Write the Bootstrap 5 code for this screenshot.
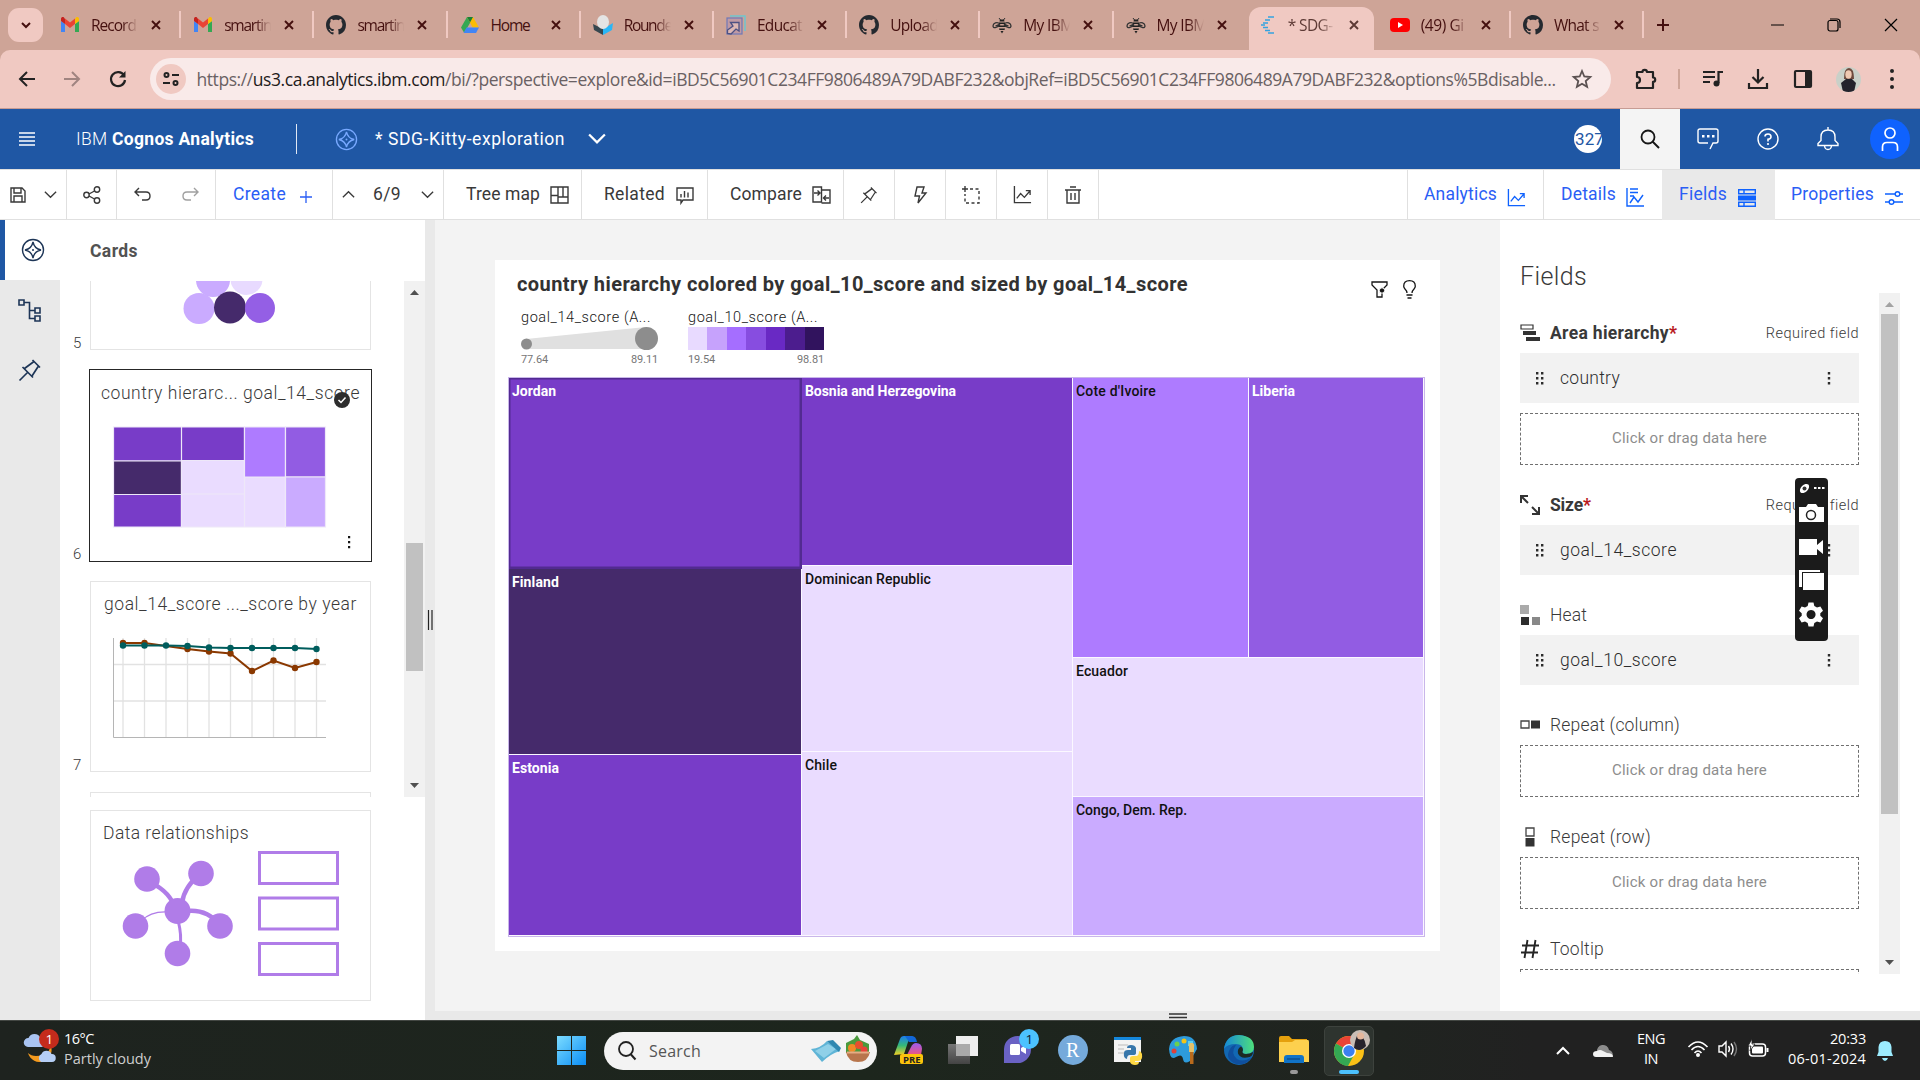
<!DOCTYPE html>
<html lang="en">
<head>
<meta charset="utf-8">
<title>IBM Cognos Analytics</title>
<link href="https://cdn.jsdelivr.net/npm/bootstrap@5.3.0/dist/css/bootstrap.min.css" rel="stylesheet">
<style>
html,body{height:1080px;overflow:hidden}
body{width:1920px;font-family:Roboto,"Liberation Sans",sans-serif;font-size:17.5px;line-height:1.3;color:#393939;background:#fff}
svg{display:block;flex:none;overflow:visible}
.fit{display:inline-block;white-space:nowrap;flex:none}
.ln{fill:none;stroke:currentColor;stroke-width:1.4}
.win-font{font-family:"Open Sans","Noto Sans",sans-serif}
/* browser */
.tabstrip{height:50px;background:#cea497;color:#45100f;font-size:15.5px}
.tab-menu{width:35px;height:34px;margin:8px 5px 8px 8px;border-radius:11px;background:#f0c9c2}
.b-tab{width:133.2px;height:36px;padding-left:12px;position:relative;flex:none}
.b-tab .ttl{width:48px;margin-left:11px;overflow:hidden;white-space:nowrap;-webkit-mask-image:linear-gradient(90deg,#000 65%,transparent 98%)}
.b-tab .cls{margin-left:11px}
.b-tab.sep{border-right:2px solid transparent;border-image:linear-gradient(transparent 14%,#f0c9c2 14%,#f0c9c2 84%,transparent 84%) 1}
.b-tab.now{height:43px;margin-top:7px;background:#f0c9c2;border-radius:12px 12px 0 0;width:125px;margin-left:2px;margin-right:4px;padding-bottom:7px;color:#5d3a35}
.b-tab.now .cls{margin-left:12px}
.addr-row{height:59px;background:#f0c9c2;border-radius:10px 10px 0 0;border-bottom:1px solid #c79c94}
.addr-wrap{background:#cea497}
.addr{width:1461px;height:42px;border-radius:21px;background:#f9eae9;color:#6a6163;font-size:17.5px;margin-left:2.5px}
.addr b{font-weight:400;color:#1f1b1b}
.tune{width:30px;height:30px;border-radius:50%;background:#f0c9c2;margin-left:6px}
.c24{width:45px}
/* app header */
.app-head{height:60px;background:#1f57a4;color:#fff}
.search-cell{width:60px;height:60px;background:#f4f4f4;color:#161616}
.h-cell{width:60px}
.count{width:28px;height:28px;border-radius:50%;background:#fff;color:#1f57a4;margin-right:18px;padding-left:1px;font-size:17px}
.user{width:40px;height:40px;border-radius:50%;background:#0f62fe}
/* toolbar */
.tools{height:51px;border-bottom:1px solid #e0e0e0;border-top:1px solid #e0e0e0}
.t-cell{height:50px;border-right:1px solid #e0e0e0;flex:none}
.blue{color:#0f62fe}
.blue-txt{color:#2a5ef5}
/* main */
.main{height:800px}
.rail{width:60px;background:#e9e9e9;color:#1d3557}
.rail-it{height:60px;width:60px;padding-right:1px}
.rail-it.on{background:#fff;border-left:5px solid #1f57a4;padding-right:0}
.cards{width:365px}
.cards-h{height:61px;padding:20px 0 0 30px;font-weight:700;color:#525252}
.list{height:516px;overflow:hidden}
.tile{width:281px;height:191px;border:1px solid #e4e4e4;margin:0 0 20px 9px;background:#fff;position:relative;flex:none}
.tile.part{height:69px;border-top:0}
.tile.sel{border-color:transparent;outline:1px solid #262626}
.tile .cap{position:absolute;left:0;top:11px;width:100%;text-align:center;font-weight:300}
.no{width:21px;padding-left:13px;font-size:15px;font-weight:300;flex:none;height:194px}
.tile svg.art{position:absolute;left:-1px;top:-1px}
.row-no{height:211px}
.sbar{width:21px;background:#f1f1f1}
.thumb{width:17px;background:#c1c1c1}
.split{width:10px;background:#e9e9e9}
.stage{background:#f3f3f3;height:791px;width:1065px;padding:40px 60px}
.sheet{width:945px;height:691px;background:#fff;padding:9px 13px}
.foot{height:9px;background:#e9e9e9}
.viz-t{font-size:20px;font-weight:700;color:#323232;height:34px;padding:2px 0 0 9px}
.leg{height:74px;margin-left:13px}
.leg-n{font-size:14.5px;line-height:18px;color:#161616;font-weight:300}
.leg-v{font-size:11px;line-height:14px;color:#767676}
.ramp{height:23px;width:136px}
.ramp div{flex:1}
.tmap{width:917px;height:560px;font-size:14px;color:#111;border:1px solid #c9b6ea}
.tc{border-right:1px solid #fbf8ff;border-bottom:1px solid #fbf8ff;padding:3px;font-weight:500;overflow:hidden;flex:none;line-height:20px}
.tc.w{color:#fff;font-weight:700}
.c1{background:#783cc8}.c2{background:#452a6b}.c3{background:#eadcff}.c4{background:#ae7bff}.c5{background:#925ce3}.c6{background:#caabff}
.tc.hi{box-shadow:inset 0 0 0 1.5px #522a91;border-color:#522a91}
/* fields */
.fields{width:420px;height:791px;padding-left:20px}
.fields h2{font-size:25px;font-weight:300;height:73px;padding-top:41px;margin:0;line-height:32px}
.fl{height:681px;width:339px;overflow:hidden;padding-top:20px;position:relative}
.f-h{height:40px}
.f-h .f-n{margin-left:10px;font-weight:300}
.f-h b{font-weight:700}
.star{color:#b81921;font-weight:700}
.f-i{height:50px;background:#f2f2f2;padding:0 26px 0 15px;margin-bottom:20px;font-weight:300;color:#2c2c2c}
.f-d{height:52px;border:1px dashed #6f6f6f;margin-bottom:20px;color:#8d8d8d;font-size:15px;padding-bottom:1px}
.req{font-size:14.5px;font-weight:300;padding-top:2px}
.capture{position:absolute;left:1795px;top:478px;width:33px;height:163px;background:#1b1b1b;border-radius:4px}
/* taskbar */
.task{height:60px;background:linear-gradient(90deg,#1e231f,#1d261d 45%,#202420 72%,#212121 80%);border-top:1px solid #434743;color:#fff;font-size:14.5px;line-height:20px}
.two{padding-bottom:3px}
.s-pill{width:273px;height:38px;border-radius:19px;background:#f3f3f3;color:#555;font-size:16px}
.ti{width:55.2px;height:60px;padding-bottom:2px;position:relative;flex:none}
.ti.act{width:50px;height:50px;background:#2e342f;border:1px solid #3d423d;border-radius:5px;margin:0 2px;padding:0}
</style>
</head>
<body>
<svg width="0" height="0" class="position-absolute">
<defs>
<symbol id="gmail" viewBox="0 0 20 20"><path fill="#4285f4" d="M1 17h4V9L1 6z"/><path fill="#34a853" d="M15 17h4V6l-4 3z"/><path fill="#fbbc04" d="M15 9l4-3V4c0-2-2-2.500-3-1.500L15 4z"/><path fill="#c5221f" d="M5 9L1 6V4c0-2 2-2.500 3-1.500L5 4z"/><path fill="#ea4335" d="M5 3.500l5 4 5-4V9l-5 4-5-4z"/></symbol>
<symbol id="gh" viewBox="0 0 16 16"><path fill="#24292f" d="M8 0C3.580 0 0 3.580 0 8c0 3.540 2.290 6.530 5.470 7.590.4.070.550-.170.550-.380 0-.190-.010-.820-.010-1.490-2.010.370-2.530-.490-2.690-.940-.090-.230-.480-.940-.820-1.130-.280-.150-.680-.520-.010-.530.630-.010 1.080.580 1.230.820.720 1.210 1.870.870 2.330.660.070-.520.280-.870.510-1.070-1.780-.2-3.640-.890-3.640-3.950 0-.870.310-1.590.820-2.150-.080-.2-.360-1.020.080-2.120 0 0 .670-.210 2.200.820.640-.180 1.320-.270 2-.270s1.360.090 2 .270c1.530-1.040 2.200-.820 2.200-.820.440 1.100.160 1.920.080 2.120.510.560.820 1.270.820 2.150 0 3.070-1.870 3.750-3.650 3.950.290.250.540.730.540 1.480 0 1.070-.010 1.930-.010 2.200 0 .210.150.460.550.380A8 8 0 0 0 16 8c0-4.420-3.580-8-8-8"/></symbol>
<symbol id="drive" viewBox="0 0 20 20"><path fill="#34a853" d="M7 2l3.200 5.500L4.300 18 1 12.500z"/><path fill="#fbbc04" d="M7 2h6l6 10.500h-6.300z"/><path fill="#4285f4" d="M6.500 12.500H19L16 18H3.500z"/><path fill="#188038" d="M7 2h6l-3 5.500z"/></symbol>
<symbol id="rf" viewBox="0 0 20 20"><path fill="#37474f" d="M0 9l10 5v6L1 15z"/><path fill="#29b6f6" d="M20 8l-10 6v6l9-5z"/><ellipse cx="10" cy="7" rx="6" ry="7" fill="#e4e4e4"/></symbol>
<symbol id="edu" viewBox="0 0 20 20"><path fill="none" stroke="#6ec5d0" stroke-width="1.500" d="M4 1h15v15"/><rect x="1" y="3" width="15" height="16" fill="#c09aa4" stroke="#6f78b8" stroke-width="1.200"/><path fill="#dcb7b4" stroke="#4d5183" stroke-width="1.300" d="M1.500 18.500L1.500 15 7 11 4.500 7.500H13V16l-3-2-5 5z"/></symbol>
<symbol id="bee" viewBox="0 0 20 20"><g fill="none" stroke="#333" stroke-width="1.300"><path d="M8 9C5 6 1 8.500 1 11s4 2.500 7-1.500M12 9c3-3 7-.5 7 2s-4 2.500-7-1.500M3.500 11L8 9M16.500 11L12 9"/><path d="M7 3l1.500 2M13 3l-1.500 2" stroke-width="1"/></g><path fill="#222" d="M8 4.500h4l.5 2h-5zM7 7.500h6V9H7zM6.500 10.500h7V12h-7zM7 13.500h6l-.5 1.500h-5zM8.500 16h3L10 18.500z"/></symbol>
<symbol id="cog" viewBox="0 0 16 20"><g stroke="#35a3e0" stroke-width="1.500"><path d="M7 2h6M4 5h5M2 8h5M0 10h4M2 12.500h5M4 15.500h5M7 18h6" fill="none"/></g></symbol>
<symbol id="yt" viewBox="0 0 20 20"><rect y="3" width="20" height="14" rx="4" fill="#f00"/><path fill="#fff" d="M8 7l5 3-5 3z"/></symbol>
<symbol id="x" viewBox="0 0 12 12"><path d="M2 2l8 8M10 2l-8 8" stroke="currentColor" stroke-width="1.900"/></symbol>
<symbol id="dn" viewBox="0 0 16 16"><path class="ln" d="M2 5l6 6 6-6"/></symbol>
<symbol id="up" viewBox="0 0 16 16"><path class="ln" d="M2 11l6-6 6 6"/></symbol>
<symbol id="compass" viewBox="0 0 24 24"><circle class="ln" cx="12" cy="12" r="10.500" stroke-width="1.500"/><path class="ln" d="M12 4c1 5 3 7 8 8-5 1-7 3-8 8-1-5-3-7-8-8 5-1 7-3 8-8z"/><circle cx="12" cy="12" r="1" fill="currentColor"/></symbol>
<symbol id="pin" viewBox="0 0 24 24"><path class="ln" style="stroke-width:1.700" d="M14.500 2l7.500 7.500M16 3.500L6.500 10.500M20.500 8L14 18M4.500 9l10.500 10.500M9.500 14.500L1.500 22.500"/></symbol>
<symbol id="lchart" viewBox="0 0 20 20"><path class="ln" stroke-width="1.500" d="M1.500 1v17.500H19M4 14l4-5 4 4 6-7M13.500 6H18v4.500"/></symbol>
<symbol id="keb" viewBox="0 0 4 14"><path fill="currentColor" d="M.8 1h2.400v2.400H.8zM.8 6h2.400v2.400H.8zM.8 11h2.400v2.400H.8z"/></symbol>
<symbol id="grip" viewBox="0 0 9 14"><path fill="currentColor" d="M1 1h2.400v2.400H1zM1 6h2.400v2.400H1zM1 11h2.400v2.400H1zM6 1h2.400v2.400H6zM6 6h2.400v2.400H6zM6 11h2.400v2.400H6z"/></symbol>
<linearGradient id="gb" x2="1" y2="1"><stop stop-color="#7cdcff"/><stop offset="1" stop-color="#0a8df5"/></linearGradient>
<linearGradient id="ge" x2="1" y2="0"><stop stop-color="#1588d8"/><stop offset="1" stop-color="#4ee07c"/></linearGradient>
<linearGradient id="gcp" x2="0" y2="1"><stop stop-color="#1c7df0"/><stop offset=".5" stop-color="#35b978"/><stop offset="1" stop-color="#f2d024"/></linearGradient>
<linearGradient id="gcq" x2="0" y2="1"><stop stop-color="#9a5cf0"/><stop offset="1" stop-color="#f0557e"/></linearGradient>
<linearGradient id="gtv" x2="0" y2="1"><stop stop-color="#777"/><stop offset="1" stop-color="#444"/></linearGradient>
</defs></svg>

<!-- browser tabs -->
<div class="tabstrip d-flex win-font">
  <div class="tab-menu d-flex align-items-center justify-content-center"><svg width="14" height="14"><path d="M3 5l4 4 4-4" fill="none" stroke="currentColor" stroke-width="2"/></svg></div>
  <div class="d-flex align-items-center">
    <div class="b-tab sep d-flex align-items-center"><svg width="20" height="20"><use href="#gmail"/></svg><span class="ttl"><span class="fit" data-w="45">Record</span></span><svg class="cls" width="12" height="12"><use href="#x"/></svg></div>
    <div class="b-tab sep d-flex align-items-center"><svg width="20" height="20"><use href="#gmail"/></svg><span class="ttl"><span class="fit" data-w="47">smartin</span></span><svg class="cls" width="12" height="12"><use href="#x"/></svg></div>
    <div class="b-tab sep d-flex align-items-center"><svg width="20" height="20"><use href="#gh"/></svg><span class="ttl"><span class="fit" data-w="47">smartin</span></span><svg class="cls" width="12" height="12"><use href="#x"/></svg></div>
    <div class="b-tab sep d-flex align-items-center"><svg width="20" height="20"><use href="#drive"/></svg><span class="ttl" style="-webkit-mask-image:none"><span class="fit" data-w="39">Home</span></span><svg class="cls" width="12" height="12"><use href="#x"/></svg></div>
    <div class="b-tab sep d-flex align-items-center"><svg width="20" height="24"><use href="#rf"/></svg><span class="ttl"><span class="fit" data-w="48">Rounde</span></span><svg class="cls" width="12" height="12"><use href="#x"/></svg></div>
    <div class="b-tab sep d-flex align-items-center"><svg width="20" height="22"><use href="#edu"/></svg><span class="ttl"><span class="fit" data-w="45">Educat</span></span><svg class="cls" width="12" height="12"><use href="#x"/></svg></div>
    <div class="b-tab sep d-flex align-items-center"><svg width="20" height="20"><use href="#gh"/></svg><span class="ttl"><span class="fit" data-w="48">Upload</span></span><svg class="cls" width="12" height="12"><use href="#x"/></svg></div>
    <div class="b-tab sep d-flex align-items-center"><svg width="20" height="20"><use href="#bee"/></svg><span class="ttl"><span class="fit" data-w="50">My IBM</span></span><svg class="cls" width="12" height="12"><use href="#x"/></svg></div>
    <div class="b-tab d-flex align-items-center"><svg width="20" height="20"><use href="#bee"/></svg><span class="ttl"><span class="fit" data-w="50">My IBM</span></span><svg class="cls" width="12" height="12"><use href="#x"/></svg></div>
    <div class="b-tab now d-flex align-items-center"><svg width="16" height="20"><use href="#cog"/></svg><span class="ttl"><span class="fit" data-w="45">* SDG-</span></span><svg class="cls" width="12" height="12"><use href="#x"/></svg></div>
    <div class="b-tab sep d-flex align-items-center"><svg width="20" height="20"><use href="#yt"/></svg><span class="ttl"><span class="fit" data-w="43">(49) Gi</span></span><svg class="cls" width="12" height="12"><use href="#x"/></svg></div>
    <div class="b-tab sep d-flex align-items-center"><svg width="20" height="20"><use href="#gh"/></svg><span class="ttl"><span class="fit" data-w="45">What s</span></span><svg class="cls" width="12" height="12"><use href="#x"/></svg></div>
    <svg style="margin-left:12px" width="14" height="14"><path d="M7 1v12M1 7h12" stroke="currentColor" stroke-width="2"/></svg>
  </div>
  <div class="d-flex align-items-center ms-auto text-black" style="padding-right:22px">
    <svg width="14" height="14"><path d="M0 7h13" stroke="currentColor"/></svg>
    <svg style="margin:0 43px 0 42px" width="14" height="14"><path class="ln" style="stroke-width:1.200" d="M3 1h7q3 0 3 3v6"/><rect class="ln" style="stroke-width:1.200" x="1" y="2.500" width="10" height="10.500" rx="2"/></svg>
    <svg width="14" height="14"><path d="M1 1l12 12M13 1L1 13" stroke="currentColor" stroke-width="1.200"/></svg>
  </div>
</div>
<!-- address row -->
<div class="addr-wrap"><div class="addr-row d-flex align-items-center win-font" style="color:#222">
  <div class="c24 d-flex justify-content-center ms-1"><svg width="16" height="16"><path d="M16 8H1.500M8 1L1 8l7 7" fill="none" stroke="currentColor" stroke-width="2"/></svg></div>
  <div class="c24 d-flex justify-content-center" style="color:#a08480"><svg width="16" height="16"><path d="M0 8h14.500M8 1l7 7-7 7" fill="none" stroke="currentColor" stroke-width="2"/></svg></div>
  <div class="c24 d-flex justify-content-center me-2"><svg style="margin-left:2px" width="16" height="16"><path d="M14 4.500A7 7 0 1 0 15 9" fill="none" stroke="currentColor" stroke-width="2.200"/><path d="M15.500 0v6.500H9z" fill="currentColor"/></svg></div>
  <div class="addr d-flex align-items-center">
    <div class="tune d-flex align-items-center justify-content-center"><svg width="16" height="14"><g fill="none" stroke="#222" stroke-width="2"><circle cx="3.500" cy="3" r="2"/><path d="M9 3h7M0 11h7"/><circle cx="12.500" cy="11" r="2"/></g></svg></div>
    <span class="fit ms-2" data-w="1359" style="padding-left:3px">https://<b>us3.ca.analytics.ibm.com</b>/bi/?perspective=explore&amp;id=iBD5C56901C234FF9806489A79DABF232&amp;objRef=iBD5C56901C234FF9806489A79DABF232&amp;options%5Bdisable...</span>
    <svg class="ms-auto" style="margin-right:19px" width="20" height="20"><path d="M10 2l2.300 5.500 6 .500-4.600 4 1.400 5.800L10 14.700l-5.100 3.100L6.300 12 1.700 8l6-.5z" fill="none" stroke="#5c5252" stroke-width="1.800"/></svg>
  </div>
  <svg style="margin-left:24px" width="22" height="22"><path d="M2 4h5.500a2.200 2.200 0 0 1 4.400 0H18v5.500a2.200 2.200 0 0 1 0 4.400V20H2v-5a3 3 0 0 0 0-6z" fill="none" stroke="currentColor" stroke-width="2.200" stroke-linejoin="round"/></svg>
  <div style="width:2px;height:20px;background:#cea497;margin-left:21px"></div>
  <svg style="margin-left:23px" width="20" height="18"><path d="M0 2h12M0 7h12M0 12h7" stroke="currentColor" stroke-width="2.200"/><circle cx="13.500" cy="13.500" r="3" fill="currentColor"/><path d="M15.500 13V2H20" fill="none" stroke="currentColor" stroke-width="2.200"/></svg>
  <svg style="margin-left:25px" width="20" height="20"><path d="M10 0v13M4.500 8l5.500 5.500L15.500 8M1 14v5h18v-5" fill="none" stroke="currentColor" stroke-width="2.200"/></svg>
  <svg style="margin-left:26px" width="18" height="18"><rect x="1" y="1" width="16" height="16" rx="1" fill="none" stroke="currentColor" stroke-width="2.200"/><path d="M11 1h6v16h-6z" fill="currentColor"/></svg>
  <svg style="margin-left:24px" width="25" height="25" viewBox="0 0 25 25"><clipPath id="av"><circle cx="12.500" cy="12.500" r="12.500"/></clipPath><g clip-path="url(#av)"><path fill="#c9d0c8" d="M0 0h25v25H0z"/><path fill="#6d4a3d" d="M8 12q0-11 5-11t5 11z"/><ellipse cx="12.500" cy="7.500" rx="3.200" ry="4.200" fill="#efc9b2"/><path fill="#24232c" d="M5 16l5-4h6l4 4-2 9H7z"/></g></svg>
  <svg style="margin-left:29px" width="4" height="20"><path fill="currentColor" d="M2 0a2 2 0 0 1 0 4 2 2 0 0 1 0-4m0 8a2 2 0 0 1 0 4 2 2 0 0 1 0-4m0 8a2 2 0 0 1 0 4 2 2 0 0 1 0-4"/></svg>
</div></div>
<!-- product header -->
<div class="app-head d-flex align-items-center">
  <svg style="margin-left:19px" width="16" height="14"><path d="M0 1h16M0 5h16M0 9h16M0 13h16" stroke="#fff" stroke-width="1.300"/></svg>
  <span class="fit" data-w="178" style="margin-left:41px"><span class="fw-light">IBM</span> <b>Cognos Analytics</b></span>
  <div style="width:1px;height:30px;background:#e0e8f4;margin-left:42px"></div>
  <svg style="margin-left:38px;color:#78a9ff" width="23" height="23"><use href="#compass"/></svg>
  <span class="fit" data-w="190" style="margin-left:17px">* SDG-Kitty-exploration</span>
  <svg style="margin-left:23px" width="18" height="18" viewBox="0 0 16 16"><path style="stroke-width:2" class="ln" d="M1 4l7 7 7-7"/></svg>
  <div class="ms-auto count d-flex align-items-center"><span class="fit" data-w="29">327</span></div>
  <div class="search-cell d-flex align-items-center justify-content-center"><svg width="20" height="20"><circle cx="8" cy="8" r="6.500" fill="none" stroke="currentColor" stroke-width="1.800"/><path d="M12.500 12.500L19 19" stroke="currentColor" stroke-width="2"/></svg></div>
  <div class="h-cell d-flex justify-content-center pe-1"><svg width="22" height="22"><path class="ln" d="M13 21l3-6h3q2 0 2-2V3q0-2-2-2H3Q1 1 1 3v10q0 2 2 2h8"/><path fill="#fff" d="M5 7h2.500v2.500H5zM10 7h2.500v2.500H10zM15 7h2.500v2.500H15z"/></svg></div>
  <div class="h-cell d-flex justify-content-center pe-1"><svg width="22" height="22"><circle class="ln" cx="11" cy="11" r="10"/><path class="ln" style="stroke-width:1.600" d="M8 8.500Q8 6 11 6t3 2.700Q14 11 11 11.300V13.500"/><circle cx="11" cy="16" r="1.100" fill="#fff"/></svg></div>
  <div class="h-cell d-flex justify-content-center pe-1"><svg width="22" height="24"><path class="ln" d="M11 3v-3M1 18.500v-2l3-3V10q0-7 7-7t7 7v3.500l3 3v2zM7.500 19q.5 3.500 3.500 3.500t3.500-3.500"/></svg></div>
  <div class="h-cell d-flex justify-content-center"><div class="user d-flex align-items-center justify-content-center"><svg width="18" height="24"><circle class="ln" style="stroke-width:1.700" cx="9" cy="6" r="5"/><path class="ln" style="stroke-width:1.700" d="M1.500 24v-4q0-4.500 4.500-4.500h6q4.500 0 4.500 4.500v4"/></svg></div></div>
</div>
<!-- exploration toolbar -->
<div class="tools d-flex align-items-center">
  <div class="t-cell d-flex align-items-center" style="width:67px;padding-left:10px"><svg width="16" height="16"><path class="ln" d="M1 1h11l3 3v11H1zM4 1v5h7V1M4 15V9h8v6"/></svg><svg style="margin-left:17px" width="15" height="15" viewBox="0 0 16 16"><use href="#dn"/></svg></div>
  <div class="t-cell d-flex align-items-center justify-content-center" style="width:50px"><svg width="18" height="18"><g class="ln"><circle cx="3.500" cy="9" r="2.700"/><circle cx="14" cy="3.500" r="2.700"/><circle cx="14" cy="14.500" r="2.700"/><path d="M6 8l5.500-3M6 10l5.500 3"/></g></svg></div>
  <div class="t-cell d-flex align-items-center" style="width:99px;padding-left:17px"><svg width="17" height="14"><path class="ln" d="M5 0L1 4l4 4M1 4h11q4 0 4 4t-4 4H8"/></svg><svg style="margin-left:31px;color:#a0a0a0" width="17" height="14"><path class="ln" d="M12 0l4 4-4 4M16 4H5Q1 4 1 8t4 4h4"/></svg></div>
  <div class="t-cell d-flex align-items-center blue-txt" style="width:117px;padding-left:17px"><span class="fit" data-w="53">Create</span><svg style="margin-left:14px;margin-top:5px" width="12" height="12"><path d="M6 0v12M0 6h12" stroke="currentColor" stroke-width="1.300"/></svg></div>
  <div class="t-cell d-flex align-items-center" style="width:111px;padding-left:8px"><svg width="15" height="15" viewBox="0 0 16 16"><use href="#up"/></svg><span class="fit" data-w="28" style="margin-left:17px">6/9</span><svg style="margin-left:19px" width="15" height="15" viewBox="0 0 16 16"><use href="#dn"/></svg></div>
  <div class="t-cell d-flex align-items-center" style="width:138px;padding-left:22px"><span class="fit" data-w="74">Tree map</span><svg style="margin-left:10px" width="19" height="18"><path class="ln" d="M1 1h17v16H1zM8 1v16M1 9.500h7M8 11h10M13 1v10"/></svg></div>
  <div class="t-cell d-flex align-items-center" style="width:126px;padding-left:22px"><span class="fit" data-w="61">Related</span><svg style="margin-left:11px" width="18" height="16"><path class="ln" d="M1 1h16v12H7l-2 3v-3H1zM5 10.500V7M8.500 10.500V4M12 10.500V5.500"/></svg></div>
  <div class="t-cell d-flex align-items-center" style="width:136px;padding-left:22px"><span class="fit" data-w="72">Compare</span><svg style="margin-left:10px" width="19" height="18"><path class="ln" d="M9.500 1H1v15h8.500zM9.500 4H18v13H9.500M2 7h5.500M5.500 4.500L8 7 5.500 9.500M17 12h-5M14 9.500L11.500 12l2.500 2.500"/></svg></div>
  <div class="t-cell d-flex align-items-center justify-content-center" style="width:51px"><svg width="18" height="18"><use href="#pin"/></svg></div>
  <div class="t-cell d-flex align-items-center justify-content-center" style="width:51px"><svg width="14" height="18"><path class="ln" d="M4 1h7L9 7h4L5 17l1.500-7H2z"/></svg></div>
  <div class="t-cell d-flex align-items-center justify-content-center" style="width:51px"><svg width="18" height="18"><path class="ln" d="M3 0v6M0 3h6"/><path class="ln" stroke-dasharray="3 2.500" d="M8 3h9v14H3V8M17 17"/></svg></div>
  <div class="t-cell d-flex align-items-center justify-content-center" style="width:51px"><svg width="19" height="19"><use href="#lchart"/></svg></div>
  <div class="t-cell d-flex align-items-center justify-content-center" style="width:51px"><svg width="16" height="18"><path class="ln" d="M0 4h16M2 4v13h12V4M5 1h6M6 7v7M10 7v7"/></svg></div>
  <div class="t-cell d-flex align-items-center blue-txt ms-auto" style="width:137px;border-left:1px solid #e0e0e0;padding-left:16px"><span class="fit" data-w="73">Analytics</span><svg class="blue" style="margin:6px 0 0 10px" width="19" height="19"><use href="#lchart"/></svg></div>
  <div class="t-cell d-flex align-items-center blue-txt" style="width:118px;padding-left:17px;border:0"><span class="fit" data-w="55">Details</span><svg class="blue" style="margin:6px 0 0 10px" width="18" height="19"><path class="ln" d="M1 0v18h17M4 1h8M4 4.500h8M4 8h4M4 15l4-6 4 5 5-7"/></svg></div>
  <div class="t-cell d-flex align-items-center blue-txt" style="width:113px;padding-left:17px;border:0;background:#e9e9e9"><span class="fit" data-w="48">Fields</span><svg class="blue" style="margin:6px 0 0 11px" width="18" height="18"><path class="ln" d="M.7.7h16.600v4H.7zM.7 13.300h16.600v4H.7zM6 .7v4M6 13.300v4"/><path d="M0 6.500h18v5H0z" fill="currentColor"/></svg></div>
  <div class="t-cell d-flex align-items-center blue-txt" style="width:145px;padding-left:16px;border:0"><span class="fit" data-w="83">Properties</span><svg class="blue" style="margin:6px 0 0 11px" width="18" height="16"><g class="ln"><path d="M0 4h10M15 4h3M0 12h4M9 12h9"/><circle cx="12.500" cy="4" r="2.300"/><circle cx="6.500" cy="12" r="2.300"/></g></svg></div>
</div>
<!-- workspace -->
<div class="main d-flex">
  <div class="rail">
    <div class="rail-it on d-flex align-items-center justify-content-center"><svg width="24" height="24"><use href="#compass"/></svg></div>
    <div class="rail-it d-flex align-items-center justify-content-center"><svg width="23" height="23"><g class="ln" style="stroke-width:1.600"><path d="M1 1h5v5H1zM17 9h5v5h-5zM17 17h5v5h-5zM6 3.500h5.500v16H17M11.500 11.500H17"/></g></svg></div>
    <div class="rail-it d-flex align-items-center justify-content-center"><svg width="24" height="24"><use href="#pin"/></svg></div>
  </div>
  <div class="cards">
    <div class="cards-h"><span class="fit" data-w="48">Cards</span></div>
    <div class="d-flex">
      <div class="list flex-grow-1">
        <div class="d-flex" style="height:89px"><div class="no d-flex align-items-end" style="height:72px"><span>5</span></div>
          <div class="tile part"><svg class="art" style="top:0" width="280" height="69"><clipPath id="cb"><path d="M0 0h280v69H0z"/></clipPath><g clip-path="url(#cb)"><circle cx="123" cy="-1" r="17" fill="#caabff"/><circle cx="156.500" cy="-2" r="16" fill="#e8daff"/><circle cx="109" cy="27.500" r="15.500" fill="#caabff"/><circle cx="140" cy="26.500" r="16" fill="#452a6b"/><circle cx="170" cy="27" r="15" fill="#945fe5"/></g></svg></div></div>
        <div class="d-flex row-no"><div class="no d-flex align-items-end pb-0"><span>6</span></div>
          <div class="tile sel"><div class="cap"><span class="fit" data-w="259">country hierarc... goal_14_score</span></div>
            <svg class="art" width="281" height="191"><g stroke="#eee8f8" stroke-width="1.200"><path fill="#783cc8" d="M23.500 57h68v34h-68zM91.500 57h63v33.500h-63zM23.500 124.500h68V157h-68z"/><path fill="#452a6b" d="M23.500 91h68v33.500h-68z"/><path fill="#eadcff" d="M91.500 90.500h63v33.500h-63zM91.500 124h63v33h-63zM154.500 107h41v50h-41z"/><path fill="#ae7bff" d="M154.500 57h41v50h-41z"/><path fill="#925ce3" d="M195.500 57h40v50h-40z"/><path fill="#caabff" d="M195.500 107h40v50h-40z"/></g><circle cx="252" cy="30" r="8" fill="#2d2d2d"/><path d="M248.500 30l2.500 2.500 4.500-5" fill="none" stroke="#fff" stroke-width="1.500"/><g fill="#161616"><path d="M258 166h2.200v2.200H258zM258 171h2.200v2.200H258zM258 176h2.200v2.200H258z"/></g></svg></div></div>
        <div class="d-flex row-no"><div class="no d-flex align-items-end"><span>7</span></div>
          <div class="tile"><div class="cap"><span class="fit" data-w="253">goal_14_score ..._score by year</span></div>
            <svg class="art" width="281" height="191" viewBox="90 581 281 191"><path stroke="#e2e2e2" stroke-width="1.300" d="M123 638v99M144.500 638v99M166 638v99M187.500 638v99M209 638v99M230.500 638v99M252 638v99M273.500 638v99M295 638v99M316.500 638v99M113 664.500h213M113 701h213"/><path d="M113.500 638v99.500H326" fill="none" stroke="#b5b5b5"/><g fill="none" stroke-width="2"><path stroke="#8a3800" d="M123 643l21.500 0 21.500 3 21.500 3 21.500 2.500 21.500 2 21.500 17.500 21.500-10.500 21.500 7.500 21.500-6"/><path stroke="#005d5d" d="M123 645.500h43l21.500.5 21.500 1.500 21.500.5h65l21.500 1"/></g><g fill="#8a3800"><circle cx="123" cy="643" r="3.200"/><circle cx="144.500" cy="643" r="3.200"/><circle cx="187.500" cy="649" r="3.200"/><circle cx="209" cy="651.500" r="3.200"/><circle cx="230.500" cy="653.500" r="3.200"/><circle cx="252" cy="671" r="3.200"/><circle cx="273.500" cy="660.500" r="3.200"/><circle cx="295" cy="668" r="3.200"/><circle cx="316.500" cy="662" r="3.200"/></g><g fill="#005d5d"><circle cx="123" cy="645.500" r="3.200"/><circle cx="144.500" cy="645.500" r="3.200"/><circle cx="166" cy="645.500" r="3.200"/><circle cx="187.500" cy="646" r="3.200"/><circle cx="209" cy="647.500" r="3.200"/><circle cx="230.500" cy="648" r="3.200"/><circle cx="252" cy="648" r="3.200"/><circle cx="273.500" cy="648" r="3.200"/><circle cx="295" cy="648" r="3.200"/><circle cx="316.500" cy="649" r="3.200"/></g></svg></div></div>
        <div class="d-flex"><div class="no"></div><div class="tile"></div></div>
      </div>
      <div class="sbar d-flex flex-column align-items-center">
        <svg style="margin-top:9px" width="10" height="6"><path d="M0 5h9L4.500 0z" fill="#505050"/></svg>
        <div class="thumb" style="height:128px;margin-top:247px"></div>
        <svg class="mt-auto" style="margin-bottom:8px" width="10" height="6"><path d="M0 0h9L4.500 5z" fill="#505050"/></svg>
      </div>
    </div>
    <div class="tile" style="margin:13px 0 0 30px"><div class="cap text-start" style="padding-left:12px"><span class="fit" data-w="146">Data relationships</span></div>
      <svg class="art" width="281" height="191" viewBox="90 810 281 191"><g fill="none" stroke="#b07ce8"><path stroke-width="4.500" d="M147 881q20 8 27 24M201 873q-17 14-19 30M187 911q20-2 33 14"/><path stroke-width="3" d="M178 920q4 16 2 26"/><path stroke-width="1.300" d="M168 912q-17-1-27 9"/><path stroke-width="3" d="M259.500 852.500h78v31h-78zM259.500 898h78v31h-78zM259.500 943.500h78v31h-78z"/></g><g fill="#b07ce8"><circle cx="147" cy="879" r="12.800"/><circle cx="201" cy="873.500" r="12.800"/><circle cx="177.500" cy="911" r="13"/><circle cx="135.500" cy="926" r="12.800"/><circle cx="220" cy="926" r="12.800"/><circle cx="177.500" cy="953.500" r="12.800"/></g></svg></div>
  </div>
  <div class="split d-flex align-items-center justify-content-center"><svg width="5" height="20"><path d="M.5 0v20M4 0v20" stroke="#222" stroke-width="1.200"/></svg></div>
  <div>
    <div class="d-flex">
      <div class="stage"><div class="sheet">
        <div class="d-flex">
          <div class="viz-t"><span class="fit" data-w="671">country hierarchy colored by goal_10_score and sized by goal_14_score</span></div>
          <svg class="ms-auto" style="margin-top:12px" width="17" height="17"><path d="M1 1h15v3l-5 5v7H6V9L1 4z" fill="none" stroke="#161616" stroke-width="1.300"/><circle cx="11" cy="9.500" r="2.700" fill="#161616" stroke="#fff"/></svg>
          <svg style="margin:11px 11px 0 15px" width="13" height="19"><path d="M4 13q0-2-2-4Q.7 7.500.7 6.200.7.700 6.500.7t5.800 5.500Q12.300 7.500 11 9 9 11 9 13M3.500 15h6M4.500 18h4" fill="none" stroke="#161616" stroke-width="1.300"/></svg>
        </div>
        <div class="leg d-flex">
          <div style="width:137px;margin-top:6px"><div class="leg-n"><span class="fit" data-w="130">goal_14_score (A...</span></div>
            <svg width="137" height="24"><path d="M5 12L125 0v22H5z" fill="#e0e0e0"/><circle cx="5.500" cy="17" r="5.500" fill="#8d8d8d"/><circle cx="125.500" cy="11.500" r="11.500" fill="#8d8d8d"/></svg>
            <div class="leg-v d-flex justify-content-between" style="margin-top:2px"><span class="fit" data-w="27">77.64</span><span class="fit" data-w="27">89.11</span></div></div>
          <div style="width:137px;margin:6px 0 0 30px"><div class="leg-n"><span class="fit" data-w="130">goal_10_score (A...</span></div>
            <div class="ramp d-flex"><div style="background:#e8daff"></div><div style="background:#c6a2fc"></div><div style="background:#a56eff"></div><div style="background:#874de0"></div><div style="background:#6929c4"></div><div style="background:#4c1d8e"></div><div style="background:#31135e"></div></div>
            <div class="leg-v d-flex justify-content-between" style="margin-top:3px;width:136px"><span class="fit" data-w="27">19.54</span><span class="fit" data-w="27">98.81</span></div></div>
        </div>
        <div class="tmap d-flex">
          <div class="d-flex flex-column" style="width:293px"><div class="tc w c1 hi" style="height:191px"><span class="fit" data-w="44">Jordan</span></div><div class="tc w c2" style="height:186px"><span class="fit" data-w="47">Finland</span></div><div class="tc w c1 flex-grow-1"><span class="fit" data-w="47">Estonia</span></div></div>
          <div class="d-flex flex-column" style="width:271px"><div class="tc w c1" style="height:188px"><span class="fit" data-w="151">Bosnia and Herzegovina</span></div><div class="tc c3" style="height:186px"><span class="fit" data-w="126">Dominican Republic</span></div><div class="tc c3 flex-grow-1"><span class="fit" data-w="32">Chile</span></div></div>
          <div class="d-flex flex-column flex-grow-1"><div class="d-flex" style="height:280px"><div class="tc c4" style="width:176px"><span class="fit" data-w="80">Cote d'Ivoire</span></div><div class="tc w c5 flex-grow-1"><span class="fit" data-w="43">Liberia</span></div></div><div class="tc c3" style="height:139px"><span class="fit" data-w="52">Ecuador</span></div><div class="tc c6 flex-grow-1"><span class="fit" data-w="111">Congo, Dem. Rep.</span></div></div>
        </div>
      </div></div>
      <div class="fields">
        <h2><span class="fit" data-w="67">Fields</span></h2>
        <div class="d-flex">
          <div class="fl">
            <div class="f-h d-flex align-items-center"><svg width="20" height="18"><path d="M1 1h12v4H1z" fill="none" stroke="#333" stroke-width="1.200"/><path d="M3 7h13v4H3zM6 13h14v4H6z" fill="#333"/></svg><span class="f-n"><b class="fit" data-w="119">Area hierarchy</b><span class="star">*</span></span><span class="ms-auto req fit" data-w="93">Required field</span></div>
            <div class="f-i d-flex align-items-center mb-0"><svg width="9" height="14"><use href="#grip"/></svg><span class="fit" data-w="60" style="margin-left:16px">country</span><svg class="ms-auto" style="margin-right:2px" width="4" height="14"><use href="#keb"/></svg></div>
            <div class="f-d d-flex align-items-center justify-content-center" style="margin-top:10px"><span class="fit" data-w="155">Click or drag data here</span></div>
            <div class="f-h d-flex align-items-center"><svg width="20" height="20"><path d="M1 8V1h7M1 1l7 7M12 19h7v-7M19 19l-7-7" fill="none" stroke="#333" stroke-width="2"/></svg><span class="f-n"><b class="fit" data-w="33">Size</b><span class="star">*</span></span><span class="ms-auto req fit" data-w="93">Required field</span></div>
            <div class="f-i d-flex align-items-center"><svg width="9" height="14"><use href="#grip"/></svg><span class="fit" data-w="117" style="margin-left:16px">goal_14_score</span><svg class="ms-auto" style="margin-right:2px" width="4" height="14"><use href="#keb"/></svg></div>
            <div class="f-h d-flex align-items-center"><svg width="20" height="20"><path fill="#aaa" d="M0 0h9v9H0z"/><path fill="#2d2d2d" d="M1 12h8v8H1z"/><path fill="#888" d="M12 12h8v8h-8z"/></svg><span class="f-n fit" data-w="37">Heat</span></div>
            <div class="f-i d-flex align-items-center"><svg width="9" height="14"><use href="#grip"/></svg><span class="fit" data-w="117" style="margin-left:16px">goal_10_score</span><svg class="ms-auto" style="margin-right:2px" width="4" height="14"><use href="#keb"/></svg></div>
            <div class="f-h d-flex align-items-center"><svg width="20" height="10"><path d="M1 1h8v7H1z" fill="#fff" stroke="#444" stroke-width="1.300"/><path d="M11 .5h9v8h-9z" fill="#333"/></svg><span class="f-n fit" data-w="130">Repeat (column)</span></div>
            <div class="f-d d-flex align-items-center justify-content-center"><span class="fit" data-w="155">Click or drag data here</span></div>
            <div class="f-h d-flex align-items-center"><svg width="20" height="20"><path d="M6 1h8v8H6z" fill="#fff" stroke="#444" stroke-width="1.300"/><path d="M5.500 11h9v8.500h-9z" fill="#333"/></svg><span class="f-n fit" data-w="101">Repeat (row)</span></div>
            <div class="f-d d-flex align-items-center justify-content-center"><span class="fit" data-w="155">Click or drag data here</span></div>
            <div class="f-h d-flex align-items-center"><svg width="20" height="20"><path d="M7.500 1l-3 18M15.500 1l-3 18M2 6.500h17M1 13.500h17" stroke="#262626" stroke-width="1.900"/></svg><span class="f-n fit" data-w="54">Tooltip</span></div>
            <div class="f-d"></div>
          </div>
          <div class="sbar d-flex flex-column align-items-center" style="margin-left:20px;height:681px">
            <svg style="margin-top:9px" width="10" height="12"><path d="M0 5h9L4.500 0z" fill="#a3a3a3"/></svg>
            <div class="thumb" style="height:500px"></div>
            <svg class="mt-auto" style="margin-bottom:8px" width="10" height="6"><path d="M0 0h9L4.500 5z" fill="#505050"/></svg>
          </div>
        </div>
      </div>
    </div>
    <div class="foot"><svg style="margin-left:734px" width="18" height="9"><path d="M0 3h18M0 6.500h18" stroke="#333" stroke-width="1.500"/></svg></div>
  </div>
</div>
<!-- taskbar -->
<div class="task d-flex align-items-center win-font">
  <svg style="margin-left:25px;margin-bottom:4px" width="34" height="44" viewBox="25 1026 34 44"><path d="M28 1052a12 12 0 1 0 22-9q1 12-14 12-5 0-8-3z" fill="#f39a1e"/><path d="M28 1046a4.500 4.500 0 0 1 .5-9 6.500 6.500 0 0 1 12 0 4.500 4.500 0 0 1 1 9z" fill="#a9c4f2"/><path d="M41 1061a4.500 4.500 0 0 1 .5-8 5.500 5.500 0 0 1 10 0 4 4 0 0 1 .5 8z" fill="#b5cef5"/><circle cx="49" cy="1038" r="10" fill="#c42b1c"/><text x="45.500" y="1043" font-size="13.500" fill="#fff">1</text></svg>
  <div class="two" style="margin-left:5px;width:120px"><div><span class="fit" data-w="30">16°C</span></div><div style="color:#cfcfcf"><span class="fit" data-w="87">Partly cloudy</span></div></div>
  <svg style="margin-left:373px" width="29" height="29"><path fill="url(#gb)" d="M0 0h14v14H0zM15 0h14v14H15zM0 15h14v14H0zM15 15h14v14H15z"/></svg>
  <div class="s-pill d-flex align-items-center" style="margin-left:18px"><svg style="margin-left:14px" width="18" height="19"><circle cx="8" cy="8" r="7" fill="none" stroke="#222" stroke-width="1.800"/><path d="M12.500 13l5 5.500" stroke="#222" stroke-width="2"/></svg><span class="fit" data-w="52" style="margin-left:13px">Search</span>
    <svg class="ms-auto" style="margin-right:6px" width="60" height="34"><path fill="#5fb4d6" d="M0 15q10-1 16-8l13 10q-10 3-18 11z"/><path fill="#8fd0e8" d="M4 17l13-7 8 5-12 9z"/><path fill="#2f87b0" d="M16 7l6-1 8 8-2 4z"/><path fill="#4a9a3d" d="M35 9l8-4 3-4 3 5 9 4v9H35z"/><circle cx="41" cy="14" r="4" fill="#f08a25"/><circle cx="48" cy="11" r="4" fill="#e54f2e"/><circle cx="53" cy="16" r="3.500" fill="#e8433a"/><path fill="#b8754c" d="M35 18h24q-2 10-12 10T35 18z"/><path stroke="#e5ac84" stroke-width="2" d="M36 18.500h22"/></svg></div>
  <div class="d-flex align-items-center" style="margin-left:3px">
    <div class="ti d-flex align-items-center justify-content-center"><svg width="30" height="30"><path d="M1 20L7 4q1-3 4-3h9q-4 2-5 6l-4 12z" fill="url(#gcp)"/><path d="M14 20l4-8q2-4 5-4 6 0 6 6l-1 6z" fill="url(#gcq)"/><path fill="#1267d8" d="M12 1h7q4 0 5 6h-8z"/><rect x="7" y="19" width="23" height="10" rx="2" fill="#fcc30b"/><text x="10" y="27.500" font-size="9.500" font-weight="700" fill="#222">PRE</text></svg></div>
    <div class="ti d-flex align-items-center justify-content-center"><svg width="30" height="30"><path fill="url(#gtv)" d="M0 9h22v20H0z"/><path fill="#eee" d="M8 1h22v20H8z"/><path fill="#aaa" d="M8 9h14v12H8z"/></svg></div>
    <div class="ti d-flex align-items-center justify-content-center"><svg width="30" height="30"><path d="M1 28V14A13.500 13.500 0 1 1 14 28z" fill="#6a62c4"/><rect x="7" y="9" width="10" height="11" rx="1.500" fill="#fff"/><path fill="#fff" d="M18 13l5-3v9l-5-3z"/><circle cx="26" cy="4" r="10" fill="#4cc2ff"/><text x="22.500" y="9" font-size="13.500" fill="#102030">1</text></svg></div>
    <div class="ti d-flex align-items-center justify-content-center"><svg width="30" height="30"><circle cx="15" cy="15" r="15" fill="#75aadb"/><text x="8" y="22" font-size="20" fill="#fff" font-family="Liberation Serif,serif">R</text></svg></div>
    <div class="ti d-flex align-items-center justify-content-center"><svg width="28" height="30"><path fill="#f3f3f3" d="M0 2h27v25H0z"/><path fill="#1588dd" d="M0 2h27v3H0z"/><path stroke="#bbb" d="M4 10h10M4 14h6M4 18h6"/><path fill="#3776ab" d="M10 18q0-3 4-3h3v-2h-4q0-3 4-3t5 3v5q0 2-3 2h-3q-3 0-3 4-4-1-3-6z"/><path fill="#ffd845" d="M28 19q1 7-4 7h-3v1h4q0 3-4 3t-5-3v-4q0-2 3-2h4q2-1 2-5 2 0 3 3z"/></svg></div>
    <div class="ti d-flex align-items-center justify-content-center"><svg width="30" height="30"><path d="M15 1Q27 1 28 14l-7 12q-6 4-7-2t-7-2-7-8Q1 2 15 1z" fill="#2d9bdc"/><circle cx="8" cy="9" r="2.500" fill="#6bd04f"/><circle cx="15" cy="6" r="2.500" fill="#f2c418"/><circle cx="5" cy="16" r="2.500" fill="#e0413a"/><path fill="#5bd0f0" d="M19 6h5v5h-5z"/><path fill="#e3c06a" d="M20 12q-1-2 1-4h3q2 2 1 4v5h-5z"/><path fill="#b86a1c" d="M21 17h3.500v12H21z"/></svg></div>
    <div class="ti d-flex align-items-center justify-content-center"><svg width="30" height="30"><circle cx="15" cy="15" r="15" fill="#1268b3"/><path d="M0 14Q2 0 15 0q15 1 15 12 0 7-8 7-5 0-3-4 0-6-7-6Q3 9 0 14z" fill="url(#ge)"/><path d="M12 10q-6 8 1 14 6 4 15-2-6 9-16 7Q0 24 6 14q2-4 6-4z" fill="#0f4f9e"/><path d="M19 15q-2 4 3 4 4 0 7-2 0 5-6 5.500-7 1-9-4-1-5 3-7 2 1 2 3.500z" fill="#1d2a22"/></svg></div>
    <div class="ti d-flex align-items-center justify-content-center"><svg width="30" height="30"><path fill="#e5a00d" d="M0 3q0-2 2-2h8l3 3h15v6H0z"/><path fill="#fdd04e" d="M0 7h13l3-2h13q1 0 1 2v20H0z"/><path fill="#1173c7" d="M5 28v-5q0-3 3-3h14q3 0 3 3v5z"/><path stroke="#0b4f91" stroke-width="1.500" d="M8 24h13"/><rect x="11" y="35" width="8" height="4" rx="2" fill="#999"/></svg></div>
    <div class="ti act d-flex align-items-center justify-content-center"><svg width="30" height="30"><circle cx="15" cy="15" r="15" fill="#fbc116"/><path d="M15 15L2 7.500A15 15 0 0 1 28 7.500z" fill="#ea4335"/><path d="M15 15L2 7.500A15 15 0 0 0 14 30l6.500-12z" fill="#34a853"/><circle cx="15" cy="15" r="7" fill="#fff"/><circle cx="15" cy="15" r="5.700" fill="#3c80f0"/><circle cx="26" cy="4" r="10" fill="#c9bdb5"/><path d="M20 12q1-8 3-12t5 0 4 10q-6 7-12 2z" fill="#28232b"/><circle cx="26.500" cy="0" r="3.500" fill="#e5b79c"/><rect x="5" y="34" width="20" height="4" rx="2" fill="#4cc2ff"/></svg></div>
  </div>
  <div class="d-flex align-items-center ms-auto" style="padding-right:27px">
    <svg width="14" height="9"><path d="M1 8l6-6 6 6" fill="none" stroke="#fff" stroke-width="2"/></svg>
    <svg style="margin-left:23px" width="21" height="13"><path d="M4 8a6 6 0 0 1 12-2q4 1 4 6H4z" fill="#8c8c8c"/><path d="M3 13q-3 0-3-3t4-3q3-2 6 0l4 2q6 0 6 4z" fill="#f2f2f2"/></svg>
    <div class="text-center two" style="margin-left:22px;width:30px"><div><span class="fit" data-w="28">ENG</span></div><div><span class="fit" data-w="14">IN</span></div></div>
    <svg style="margin-left:22px;margin-bottom:3px" width="20" height="16"><g fill="none" stroke="#fff" stroke-width="1.600"><path d="M.5 6Q10-4 19.500 6M3.500 9q6.500-7 13 0M6.500 12q3.500-4 7 0"/></g><circle cx="10" cy="14" r="2" fill="#fff"/></svg>
    <svg style="margin-left:10px;margin-bottom:3px" width="20" height="18"><path d="M1 6h3l4-4v14l-4-4H1z" fill="none" stroke="#fff" stroke-width="1.400"/><path d="M10.500 6q2 3 0 6M13 3.500q4 5.500 0 11" fill="none" stroke="#fff" stroke-width="1.400"/><path d="M16 2q5 7 0 14" fill="none" stroke="#777" stroke-width="1.400"/></svg>
    <svg style="margin-left:10px;margin-bottom:3px" width="21" height="18"><rect x="1.500" y="4" width="16" height="12" rx="3" fill="none" stroke="#fff" stroke-width="1.500"/><rect x="4" y="6.500" width="11" height="7" rx="1" fill="#fff"/><path d="M18.500 8h2v4h-2z" fill="#fff"/><path d="M4-1L0 6h3l-1 5 5-7H4z" fill="#fff" stroke="#212121" stroke-width=".8"/></svg>
    <div class="text-end two" style="margin-left:18px;width:79px"><div><span class="fit" data-w="36">20:33</span></div><div><span class="fit" data-w="78">06-01-2024</span></div></div>
    <svg style="margin-left:11px" width="16" height="20"><path d="M8 0q6 0 6.500 6v5l1.500 4H0l1.500-4V6Q2 0 8 0zM5 17h6q-1 3-3 3t-3-3z" fill="#9cecff"/></svg>
  </div>
</div>
<!-- screen capture palette -->
<div class="capture"><svg width="33" height="163" viewBox="1795 478 33 163"><g fill="#fff"><ellipse cx="1804.500" cy="488.500" rx="5.500" ry="3.500" transform="rotate(-45 1804.500 488.500)"/><path d="M1814 487h2.500v2H1814zM1818 487h2.500v2H1818zM1822 487h2.500v2H1822zM1799 507h7l2-3h8l2 3h6v15h-25zM1799 539h18v6l6-5v14l-6-5v6h-18zM1799 570h21v2h-18v15h-3zM1803 573h21v17h-21z"/><path transform="translate(1811 614.500)" fill-rule="evenodd" d="M-2.500-12h5l.8 3.500 2.700 1.500 3.400-1.100L12-3.700 9.300-1.300v2.600L12 3.700 9.400 8.100 6 7 3.300 8.500 2.500 12h-5l-.8-3.500L-6 7l-3.400 1.100L-12 3.700l2.700-2.400v-2.600L-12-3.700l2.600-4.400L-6-7l2.700-1.500zM0-4.500a4.500 4.500 0 1 0 .1 0z"/></g><circle cx="1811" cy="515" r="4.500" fill="none" stroke="#222" stroke-width="1.500"/><circle cx="1804.500" cy="488.500" r="2" fill="#333"/></svg></div>
<script src="https://cdn.jsdelivr.net/npm/bootstrap@5.3.0/dist/js/bootstrap.bundle.min.js"></script>
<script>
document.querySelectorAll('.fit[data-w]').forEach(function (el) {
  var r = document.createRange();
  r.selectNodeContents(el);
  var natural = r.getBoundingClientRect().width;
  el.style.letterSpacing = ((el.dataset.w - natural) / el.textContent.length).toFixed(3) + 'px';
});
</script>
</body>
</html>
